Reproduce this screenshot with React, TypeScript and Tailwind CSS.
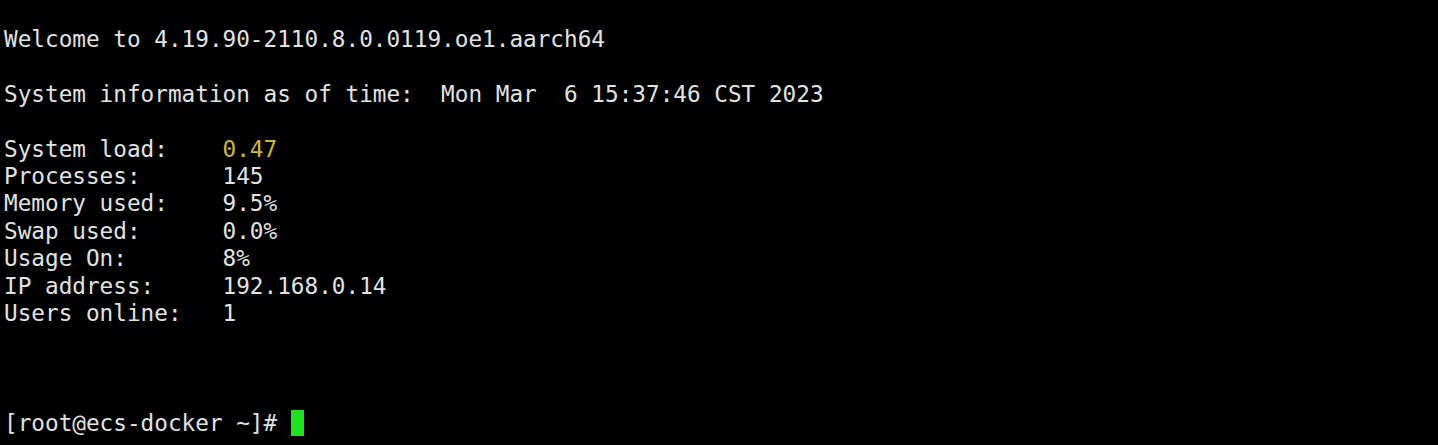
const lines: { label: string; value: string; tone?: string }[] = [
  { label: "System load:", value: "0.47", tone: "text-[#cdb73a]" },
  { label: "Processes:", value: "145" },
  { label: "Memory used:", value: "9.5%" },
  { label: "Swap used:", value: "0.0%" },
  { label: "Usage On:", value: "8%" },
  { label: "IP address:", value: "192.168.0.14" },
  { label: "Users online:", value: "1" },
];

const App = () => {
  return (
    <div
      className="w-[1438px] h-[445px] overflow-hidden bg-black pl-[4px] pt-[26px] text-[22.7px] leading-[27.4px] text-[#e2e2e2] whitespace-pre"
      style={{ fontFamily: '"DejaVu Sans Mono", "Liberation Mono", monospace' }}
    >
      <div>Welcome to 4.19.90-2110.8.0.0119.oe1.aarch64</div>
      <div>&nbsp;</div>
      <div>System information as of time:  Mon Mar  6 15:37:46 CST 2023</div>
      <div>&nbsp;</div>
      {lines.map((l) => (
        <div key={l.label}>
          {l.label.padEnd(16, " ")}
          <span className={l.tone}>{l.value}</span>
        </div>
      ))}
      <div>&nbsp;</div>
      <div>&nbsp;</div>
      <div>&nbsp;</div>
      <div className="flex items-center">
        <span>[root@ecs-docker ~]# </span>
        <span className="inline-block w-[13px] h-[26px] bg-[#1ee31e]" />
      </div>
    </div>
  );
};

export default App;
